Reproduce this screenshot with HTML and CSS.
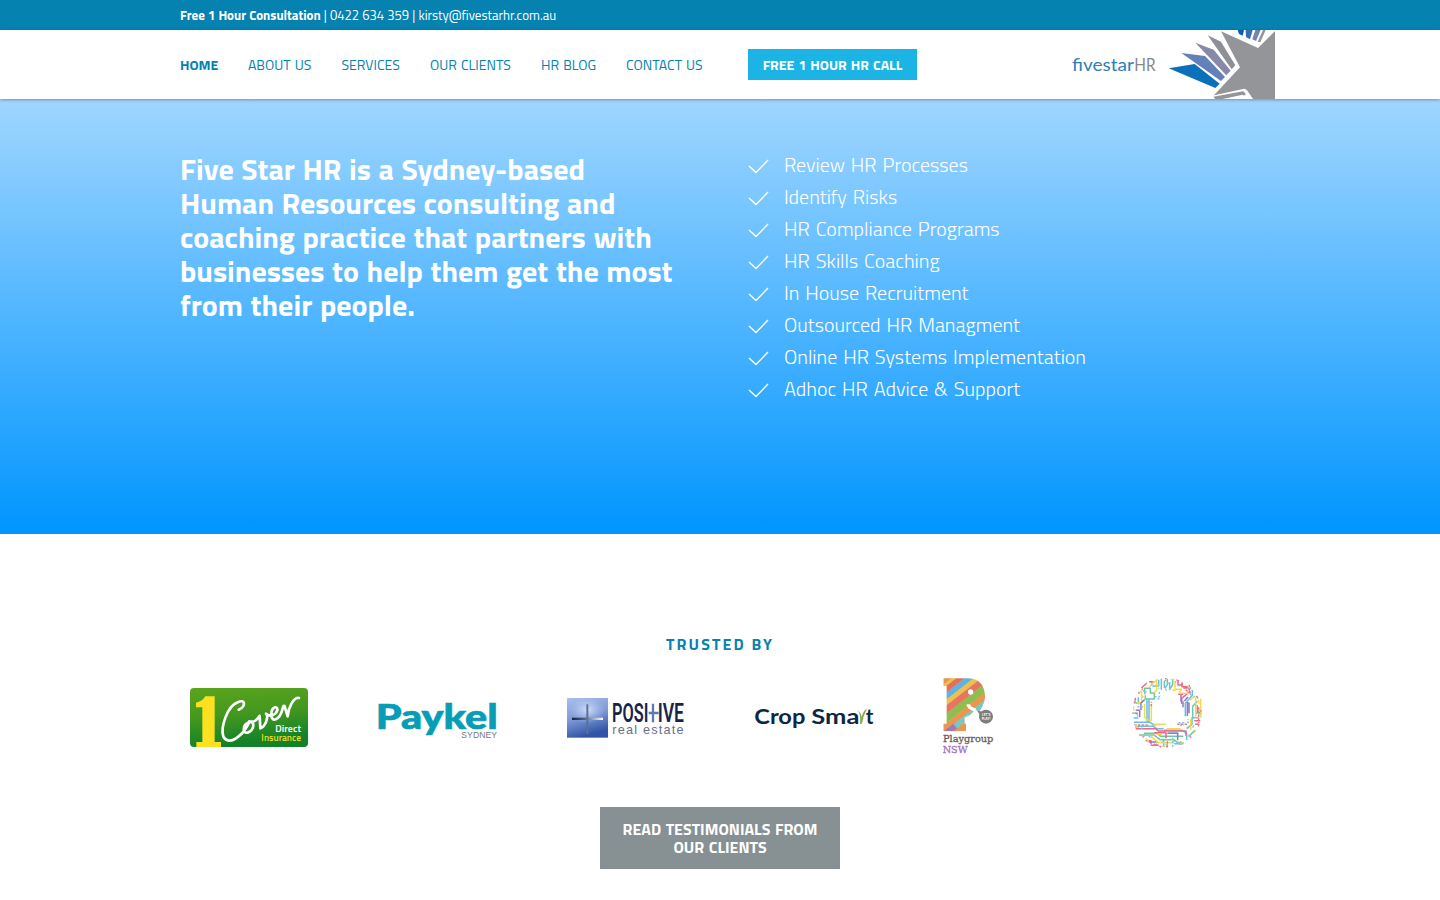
FILE: index.html
```
<!DOCTYPE html>
<html lang="en">
<head>
<meta charset="utf-8">
<title>Five Star HR</title>
<link rel="stylesheet" href="styles.css">
</head>
<body>
<div class="topbar"><div class="container"><b>Free 1 Hour Consultation</b><span class="contact"> | 0422 634 359 | kirsty@fivestarhr.com.au</span></div></div>
<header class="header">
  <div class="container header-row">
    <nav class="nav">
      <a class="active w-home">HOME</a><a class="w-about">ABOUT US</a><a class="w-services">SERVICES</a><a class="w-clients">OUR CLIENTS</a><a class="w-blog">HR BLOG</a><a class="w-contact">CONTACT US</a>
    </nav>
    <a class="call">FREE 1 HOUR HR CALL</a>
    <svg class="brand" width="215" height="69" viewBox="0 15 645 207">
      <text x="36" y="137" font-family="Lato" font-size="54" fill="#2e7fb8" textLength="186" lengthAdjust="spacingAndGlyphs">fivestar</text>
      <text x="223" y="137" font-family="Lato" font-weight="400" font-size="54" fill="#85878b" textLength="64" lengthAdjust="spacingAndGlyphs">HR</text>
      <path fill="#0a70b9" d="M326 130 404 117 479 176 466 189Z"/>
      <path fill="#6480b9" d="M364 84 435 93 495 156 483 168Z"/>
      <path fill="#8789a9" d="M406 53 461 74 512 137 499 151Z"/>
      <path fill="#8e9097" d="M443 31 483 50 526 121 515 133Z"/>
      <path fill="#939598" d="M483 19 594 69 645 18V222H578L558 194 457 216 540 127Z"/>
      <path fill="#fff" d="M452 213 553 191 561 196 579 222H452Z"/>
      <path fill="#939598" d="M460 215 549 199 555 203 557 210 500 222H466Z"/>
      <path fill="#fff" d="M488 222 548 209 557 222Z"/>
      <path fill="#0a5fad" d="M533 15H552L548 32 537 27Z"/>
      <path fill="#356fb5" d="M557 15H578L570 43 558 36Z"/>
      <path fill="#7184b2" d="M586 15H602L588 48 577 43Z"/>
      <path fill="#9294a0" d="M609 15H617L601 52 593 50Z"/>
    </svg>
  </div>
</header>
<section class="hero">
  <div class="container hero-row">
    <h1>Five Star HR is a Sydney-based<br>Human Resources consulting and<br>coaching practice that partners with<br>businesses to help them get the most<br>from their people.</h1>
    <ul class="checks">
      <li><svg viewBox="0 0 21 15"><path d="M1 7 8 13.500 20 1"/></svg>Review HR Processes</li>
      <li><svg viewBox="0 0 21 15"><path d="M1 7 8 13.500 20 1"/></svg>Identify Risks</li>
      <li><svg viewBox="0 0 21 15"><path d="M1 7 8 13.500 20 1"/></svg>HR Compliance Programs</li>
      <li><svg viewBox="0 0 21 15"><path d="M1 7 8 13.500 20 1"/></svg>HR Skills Coaching</li>
      <li><svg viewBox="0 0 21 15"><path d="M1 7 8 13.500 20 1"/></svg>In House Recruitment</li>
      <li><svg viewBox="0 0 21 15"><path d="M1 7 8 13.500 20 1"/></svg>Outsourced HR Managment</li>
      <li><svg viewBox="0 0 21 15"><path d="M1 7 8 13.500 20 1"/></svg>Online HR Systems Implementation</li>
      <li><svg viewBox="0 0 21 15"><path d="M1 7 8 13.500 20 1"/></svg>Adhoc HR Advice &amp; Support</li>
    </ul>
  </div>
</section>
<section class="trusted">
  <h2>TRUSTED BY</h2>
  <div class="logos">
    <svg width="140" height="90" viewBox="0 -30 420 270">
      <defs><linearGradient id="green" x2="0.2" y2="1"><stop stop-color="#5ba51e"/><stop offset=".5" stop-color="#43981f"/><stop offset="1" stop-color="#128128"/></linearGradient></defs>
      <rect x="30" y="24" width="354" height="177" rx="12" fill="url(#green)"/>
      <path fill="#fbe122" d="M76 49H104V186H123V201H49V186H67V82H48V68Q67 65 76 49Z"/>
      <g fill="none" stroke="#fff" stroke-width="8" stroke-linecap="round" stroke-linejoin="round">
        <path d="M176 89C199 79 196 55 173 67C141 79 121 143 130 170C146 201 190 166 207 128C187 133 187 161 202 158C221 153 228 123 208 125"/>
        <path d="M207 125C230 130 235 110 239 108L241 145C258 139 266 108 258 101C270 112 287 105 292 91C294 76 274 79 274 103C273 129 299 122 308 86C309 76 315 74 315 83L323 109C324 87 340 50 357 54"/>
      </g>
      <text x="286" y="155" font-family="Titillium Web" font-weight="600" font-size="28" fill="#fff" textLength="77" lengthAdjust="spacingAndGlyphs">Direct</text>
      <text x="244" y="182" font-family="Titillium Web" font-weight="600" font-size="28" fill="#e5dd22" textLength="119" lengthAdjust="spacingAndGlyphs">Insurance</text>
    </svg>
    <svg width="140" height="90" viewBox="0 -60 420 270">
      <text x="17" y="117" font-family="Lato" font-weight="900" font-size="105" fill="#079db5" stroke="#079db5" stroke-width="2" textLength="366" lengthAdjust="spacingAndGlyphs">Paykel</text>
      <text x="274" y="143" font-family="Liberation Sans" font-size="26" fill="#77797b" textLength="107" lengthAdjust="spacingAndGlyphs">SYDNEY</text>
    </svg>
    <svg width="130" height="90" viewBox="0 -60 390 270">
      <defs><linearGradient id="tile" x2="0.3" y2="1"><stop stop-color="#aabfec"/><stop offset=".55" stop-color="#7c98d5"/><stop offset="1" stop-color="#3155a7"/></linearGradient><linearGradient id="bar"><stop stop-color="#182440"/><stop offset=".45" stop-color="#56698f"/><stop offset="1" stop-color="#fff"/></linearGradient><radialGradient id="glow"><stop stop-color="#e4edff"/><stop offset="1" stop-color="#b8caf3" stop-opacity="0"/></radialGradient></defs>
      <rect x="21" y="24" width="123" height="119" fill="url(#tile)"/><ellipse cx="82" cy="60" rx="55" ry="40" fill="url(#glow)" opacity=".8"/>
      <path d="M79 43H85V132H79Z" fill="#587198"/><rect x="36" y="83" width="93" height="7" fill="url(#bar)"/>
      <g font-family="Roboto" font-weight="600" font-size="78" fill="#17254a"><text x="156" y="97" textLength="109" lengthAdjust="spacingAndGlyphs">POSI</text><text x="293" y="97" textLength="79" lengthAdjust="spacingAndGlyphs">IVE</text></g>
      <path d="M279 41V97M266 69H296" stroke="#6079b5" stroke-width="7"/>
      <text x="157" y="133" font-family="Liberation Sans" font-size="38" fill="#66718b" textLength="214" lengthAdjust="spacing">real estate</text>
    </svg>
    <svg class="crop" width="130" height="90" viewBox="0 -75 390 270">
      <g font-family="Lato" font-weight="700" font-size="64" fill="#0c2741"><text x="13" y="86" textLength="153" lengthAdjust="spacingAndGlyphs">Crop</text><text x="184" y="86" textLength="144" lengthAdjust="spacingAndGlyphs">Sma</text><text x="347" y="86" textLength="23" lengthAdjust="spacingAndGlyphs">t</text></g>
      <path d="M330 86C333 69 329 52 322 44Q335 55 335 68Q338 47 351 41Q340 60 336 86Z" fill="#8ba64d"/>
    </svg>
    <svg width="75" height="90" viewBox="0 0 225 270">
      <defs><clipPath id="elephant"><path d="M40 25H110C150 22 166 51 165 83Q163 102 149 123L138 121Q125 117 120 102Q113 104 114 114L131 123Q123 137 104 142V161H108V184H40V161H50V48H40Z"/></clipPath></defs>
      <g clip-path="url(#elephant)">
        <g transform="rotate(-38)">
          <rect x="-160" y="30" width="360" height="30" fill="#e9934b"/>
          <rect x="-160" y="59" width="360" height="10" fill="#e9c04c"/>
          <rect x="-160" y="68" width="360" height="16" fill="#e86d57"/>
          <rect x="-160" y="83" width="360" height="18" fill="#63b2dd"/>
          <rect x="-160" y="100" width="360" height="15" fill="#eac24d"/>
          <rect x="-160" y="114" width="360" height="20" fill="#e87562"/>
          <rect x="-160" y="133" width="360" height="23" fill="#91bc50"/>
          <rect x="-160" y="155" width="360" height="18" fill="#e9964e"/>
          <rect x="-160" y="172" width="360" height="17" fill="#76c9c8"/>
          <rect x="-160" y="170" width="116" height="24" fill="#a478b8"/>
          <rect x="-160" y="188" width="360" height="40" fill="#e9964e"/>
        </g>
      </g>
      <circle cx="122" cy="66" r="8" fill="#fff"/><path d="M114 103Q113 113 137 120" fill="none" stroke="#fff" stroke-width="9"/>
      <circle cx="168" cy="140" r="21" fill="#7d7c7f"/><path d="M140 121 158 126 150 134Z" fill="#7d7c7f"/>
      <text x="156" y="138" font-family="Inter" font-weight="700" font-size="9" fill="#fff">LET'S</text><text x="155" y="151" font-family="Inter" font-weight="700" font-size="9" fill="#fff">PLAY!</text>
      <text x="39" y="217" font-family="DejaVu Serif" font-size="30" fill="#69615f" stroke="#69615f" textLength="151" lengthAdjust="spacingAndGlyphs">Playgroup</text>
      <text x="38" y="250" font-family="DejaVu Serif" font-size="30" fill="#a475bc" stroke="#a475bc" textLength="75" lengthAdjust="spacingAndGlyphs">NSW</text>
    </svg>
    <svg width="85" height="90" viewBox="3 0 255 270" class="circuit">
      <g fill="none" stroke-width="4.500" stroke-linejoin="round">
        <g stroke="#65bfe6"><path d="M85 48H104V29M121 53V33M137 54V37M69 86V152H78M75 88V150M30 157H78L88 164H99M38 169H88L98 176H119M120 181H175L188 190V210M134 190H163M151 221H178M184 139V100L205 76V60M119 231V208M43 144H29M29 98H43V82"/></g>
        <g stroke="#6ec99e"><path d="M62 73V55H79V69H91V87H64V76M112 59V26M130 26V44L123 55M146 28V44L136 60M60 190H100L110 199H178M45 195H90L108 209H150L161 218H179M213 181L194 199M224 143H204V163L188 176M206 143V109L220 94"/></g>
        <g stroke="#ef668a"><path d="M35 176H95L103 183H186V198M91 188H126V205M65 212H81V223M52 54 69 39M92 35H75M162 31V45H177M174 37V50H192M178 54H201M196 62V45M163 73H178M173 102V85L199 63M220 106V128H229M211 152H229M213 163H223M80 226H104"/></g>
        <g stroke="#f0d955"><path d="M53 67V98H35M59 78 51 85M75 51 91 36M98 27V61L89 69M153 33V61H145M156 58H172L164 70H195M62 101V142L70 151M82 102V151H69M198 91 211 78M215 83V143M200 148V180M81 199 103 218H150M95 193H114M128 176H170M230 86V143M88 163H125"/></g>
        <g stroke="#8c79c6"><path d="M35 121H47V142M51 120V99L62 89M171 95V75M181 93 192 81M190 96V138M195 97V130M177 112V94M33 130H41M130 190H161V211M74 216H96"/></g>
        <g stroke="#82c9ec" stroke-dasharray="6 5"><path d="M92 80H106V65M100 86H112M164 158H184M168 166H180M126 62V48M146 203V231M163 215V226M192 160V147M40 110H57M104 42V56"/></g>
        <g stroke="#ef7293" stroke-dasharray="7 4"><path d="M31 165H75M82 109V95M160 163H190M224 112V160M34 90V80M45 72V62M130 214V234M96 224 112 231M185 60 202 70"/></g>
      </g>
      <g fill="none" stroke-width="4"><circle cx="129" cy="128" r="102" stroke="#ef7293" stroke-dasharray="5 29 9 36"/><circle cx="129" cy="128" r="96" stroke="#83cfa9" stroke-dasharray="7 25 4 38"/><circle cx="129" cy="128" r="89" stroke="#82c9ec" stroke-dasharray="4 35 8 29"/><circle cx="129" cy="128" r="101" stroke="#eed866" stroke-dasharray="12 42"/></g>
    </svg>
  </div>
  <a class="testimonials">READ TESTIMONIALS FROM<br>OUR CLIENTS</a>
</section>
</body>
</html>
```
FILE: styles.css
```
* { box-sizing: border-box; }
body { margin: 0; font-family: "Titillium Web", Roboto, "Open Sans", sans-serif; background: #fff; overflow: hidden; color: #0582b0; }
.container { width: 1080px; margin: 0 auto; }
.topbar { height: 30px; background: #0582b0; color: #fff; font-size: 13px; line-height: 31px; white-space: pre; word-spacing: .3px; }
.contact { font-weight: 400; }
.header { position: relative; height: 69px; background: #fff; box-shadow: 0 1px 3px rgba(0, 0, 0, .3); }
.header-row { display: flex; align-items: center; height: 69px; word-spacing: 1px; }
.nav { display: flex; flex: none; gap: 30px; width: 568px; font-size: 14px; line-height: 70px; white-space: nowrap; }
.nav .active { font-weight: 700; }
.w-home { width: 38px; }
.w-about { width: 63.500px; }
.w-services { width: 58.500px; }
.w-clients { width: 81px; }
.w-blog { width: 55px; }
.w-contact { width: 77px; }
.call { flex: none; width: 169px; height: 31px; background: #1bb4e5; color: #fff; font-size: 14px; font-weight: 700; line-height: 32px; text-align: center; white-space: nowrap; }
.brand { margin-left: 143px; flex: none; }
.hero { height: 435px; background: linear-gradient(#a0d6ff, #0095ff); color: #fff; }
.hero-row { display: flex; justify-content: space-between; padding-top: 50px; }
h1 { margin: 3px 0 0; font-size: 30px; line-height: 34px; font-weight: 700; white-space: nowrap; word-spacing: 1px; }
.checks { width: 511px; margin: 0; padding: 0; list-style: none; font-size: 20px; font-weight: 300; line-height: 32px; word-spacing: 1.500px; }
.checks li { display: flex; height: 32px; white-space: nowrap; }
.checks svg { width: 21px; height: 15px; margin: 10px 15px 0 -1px; fill: none; stroke: #fff; stroke-width: 1.400; }
.trusted { padding-top: 98px; text-align: center; }
h2 { margin: 0; font-size: 16px; line-height: 24px; letter-spacing: 2.100px; font-weight: 700; }
.logos { display: flex; gap: 50px; margin: 14px 0 0 180px; height: 90px; }
.logos svg { flex: none; }
.crop { margin-left: 10px; }
.circuit { margin-left: 70px; }
.testimonials { display: block; width: 240px; height: 62px; margin: 47px auto 0; padding-top: 13px; background: #879093; color: #fff; font-size: 16px; line-height: 18px; font-weight: 700; word-spacing: 1px; }
```
